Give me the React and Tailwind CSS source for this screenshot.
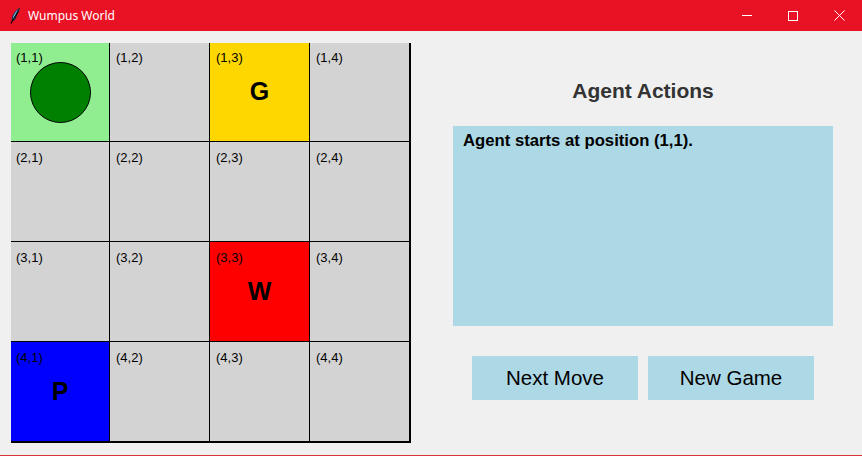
import React from "react";

const cells = [
  [{ bg: "bg-[#90ee90]", item: "agent" }, {}, { bg: "bg-[#ffd700]", letter: "G" }, {}],
  [{}, {}, {}, {}],
  [{}, {}, { bg: "bg-[#ff0000]", letter: "W" }, {}],
  [{ bg: "bg-[#0000ff]", letter: "P" }, {}, {}, {}],
];

function Feather() {
  return (
    <svg width="12" height="16" viewBox="0 0 12 16">
      <path d="M10.5 0.5 C6.5 2.5 3.5 6.5 3 12 L5.5 12 C7 8 9 4.5 10.5 0.5 Z" fill="#7fb2e5" stroke="#14223a" strokeWidth="1" />
      <path d="M9.5 2.5 L2 15.5" stroke="#000" strokeWidth="1.2" />
    </svg>
  );
}

function TitleBar() {
  return (
    <div className="flex h-[31px] items-center bg-[#e81224] text-white">
      <div className="ml-[8px] flex w-[14px] justify-center">
        <Feather />
      </div>
      <div className="ml-[6px] text-[12px] font-['Noto_Sans','Liberation_Sans',sans-serif]">Wumpus World</div>
      <div className="ml-auto flex h-full">
        <div className="flex w-[46px] items-center justify-center">
          <div className="h-px w-[10px] bg-white" />
        </div>
        <div className="flex w-[46px] items-center justify-center">
          <div className="h-[10px] w-[10px] border border-white" />
        </div>
        <div className="flex w-[46px] items-center justify-center">
          <svg width="11" height="11" viewBox="0 0 11 11">
            <path d="M0.5 0.5 L10.5 10.5 M10.5 0.5 L0.5 10.5" stroke="white" strokeWidth="1" />
          </svg>
        </div>
      </div>
    </div>
  );
}

function Board() {
  return (
    <div className="grid self-start grid-cols-[98px_99px_99px_99px] grid-rows-[98px_99px_99px_99px] gap-px bg-black pr-[2px] pb-[2px]">
      {cells.map((row, r) =>
        row.map((c, col) => (
          <div key={`${r}-${col}`} className={`relative ${c.bg || "bg-[#d3d3d3]"}`}>
            <span
              className={`absolute text-[13px] leading-none text-black ${col === 0 ? "left-[5px]" : "left-[6px]"} ${
                r === 0 ? "top-[8px]" : "top-[9px]"
              }`}
            >
              ({r + 1},{col + 1})
            </span>
            {c.item === "agent" && (
              <div className="flex h-full items-center justify-center">
                <div className="h-[61px] w-[61px] rounded-full border border-black bg-[#008000]" />
              </div>
            )}
            {c.letter && (
              <div className="flex h-full items-center justify-center text-[25px] font-bold text-black">
                {c.letter}
              </div>
            )}
          </div>
        ))
      )}
    </div>
  );
}

export default function App() {
  return (
    <div className="flex h-[456px] w-[862px] flex-col overflow-hidden bg-[#f0f0f0] font-['Liberation_Sans',Arial,sans-serif]">
      <TitleBar />
      <div className="flex flex-1 pl-[11px] pt-[12px]">
        <Board />
        {/* right side */}
        <div className="ml-[13px] flex flex-1 flex-col items-center">
          <div className="mt-[36px] text-[21px] font-bold leading-[24px] text-[#333333]">Agent Actions</div>
          <div className="mt-[23px] h-[200px] w-[380px] bg-[#add8e6] px-[10px] pt-[5px] text-[16.7px] font-bold leading-[20px] text-black">
            Agent starts at position (1,1).
          </div>
          <div className="mt-[30px] flex gap-[10px]">
            <button className="h-[44px] w-[166px] bg-[#add8e6] text-[20.5px] text-black">Next Move</button>
            <button className="h-[44px] w-[166px] bg-[#add8e6] text-[20.5px] text-black">New Game</button>
          </div>
        </div>
      </div>
      <div className="h-px bg-[#d9333d]" />
    </div>
  );
}
